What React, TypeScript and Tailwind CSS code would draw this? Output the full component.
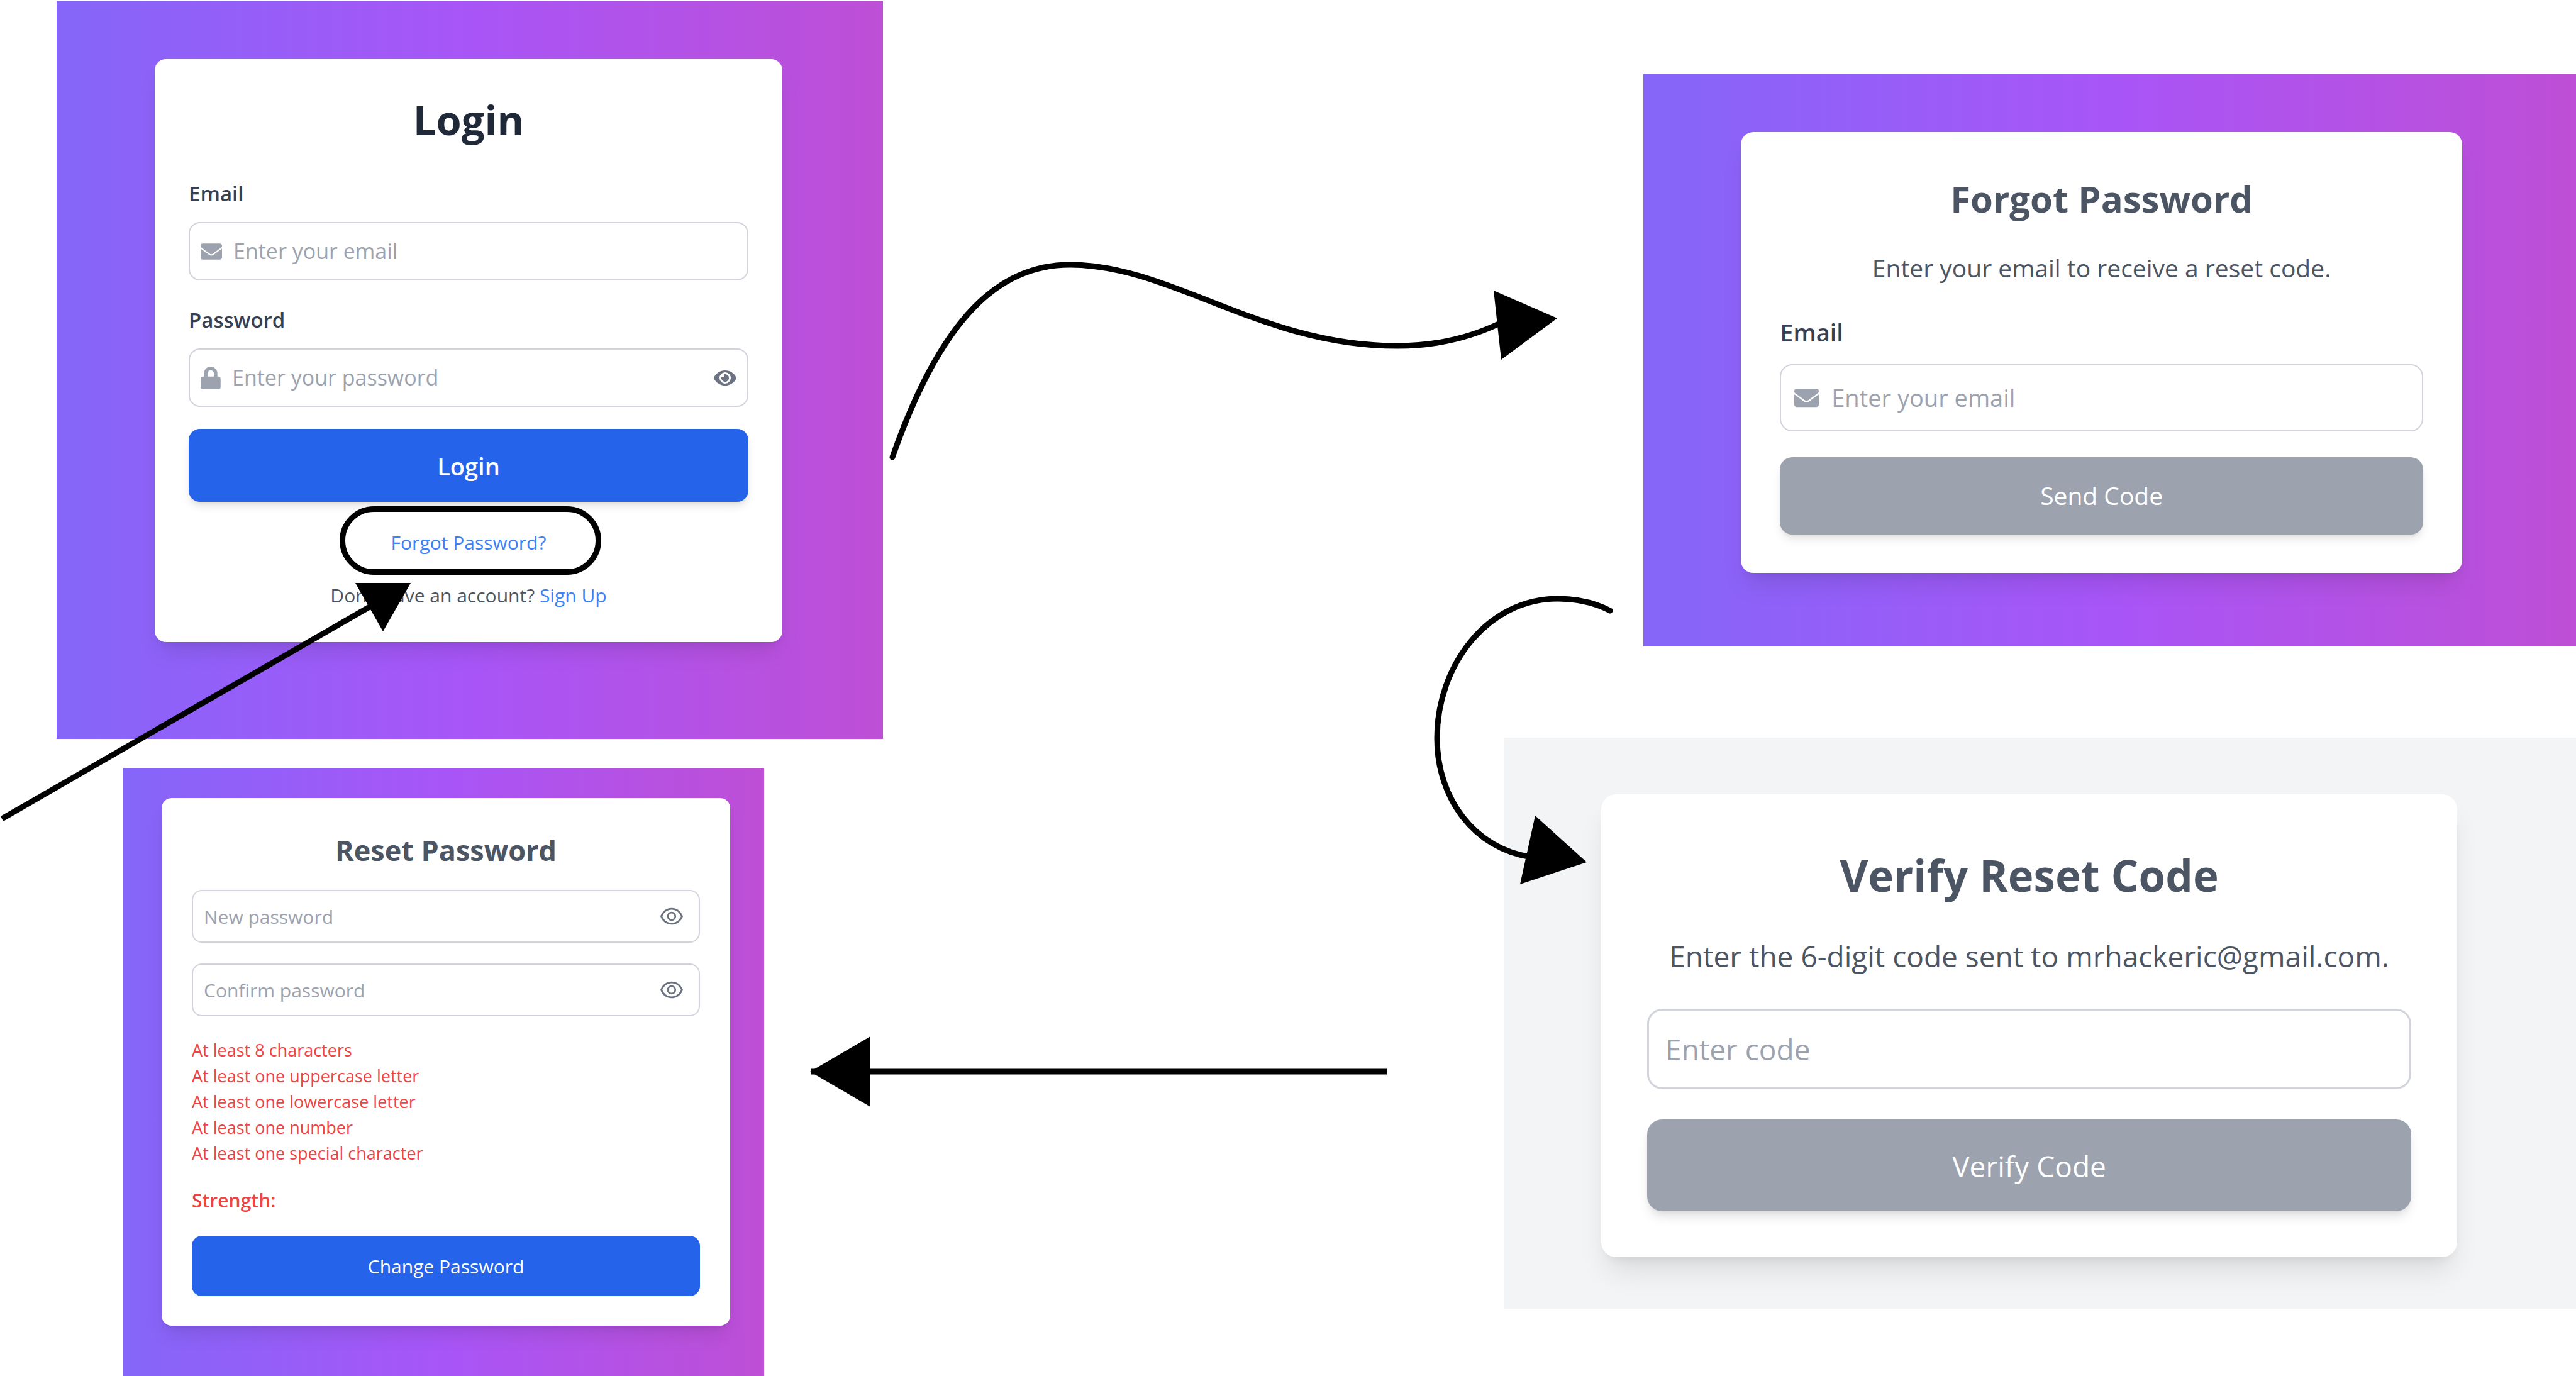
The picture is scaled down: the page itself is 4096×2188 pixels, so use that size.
import { useState, type ReactNode } from "react";
import { FaEnvelope, FaEye, FaLock } from "react-icons/fa";
import { AiOutlineEye } from "react-icons/ai";

const requirements = [
  "At least 8 characters",
  "At least one uppercase letter",
  "At least one lowercase letter",
  "At least one number",
  "At least one special character",
];

const gradient = "bg-linear-to-r/srgb from-[#8566f9] via-[#a855f7] to-[#be4fd6]";

function Card({ className, children }: { className: string; children: ReactNode }) {
  return <div className={`flex flex-col bg-white ${className}`}>{children}</div>;
}

function LoginPanel() {
  const [visible, setVisible] = useState(false);
  return (
    <section className={`ml-[90px] mt-px w-[64.16%] pb-[154px] pl-[156px] pr-[160px] pt-[93px] ${gradient}`}>
      <Card className="rounded-[18px] px-[54px] pb-[49px] pt-[55px] shadow-[0_22px_34px_-7px_rgba(0,0,0,0.1),0_9px_14px_-9px_rgba(0,0,0,0.1)]">
        <h1 className="text-center text-[65px] font-bold leading-[82px] text-[#1f2937]">Login</h1>
        <label htmlFor="login-email" className="mt-[52px] text-[33px] font-semibold leading-[50px] text-[#374151]">Email</label>
        <div className="mt-[20px] flex h-[93px] items-center gap-[18px] rounded-[18px] border-2 border-[#d1d5db] px-[17px] text-[34px]">
          <FaEnvelope className="size-[34px] shrink-0 text-[#9ca3af]" />
          <input id="login-email" type="email" placeholder="Enter your email" className="min-w-0 flex-1 outline-none placeholder:text-[#9ca3af]" />
        </div>
        <label htmlFor="login-password" className="mt-[38px] text-[33px] font-semibold leading-[50px] text-[#374151]">Password</label>
        <div className="mt-[20px] flex h-[93px] items-center gap-[18px] rounded-[18px] border-2 border-[#d1d5db] px-[17px] text-[34px]">
          <FaLock className="h-[36px] w-[32px] shrink-0 text-[#9ca3af]" />
          <input id="login-password" type={visible ? "text" : "password"} placeholder="Enter your password" className="min-w-0 flex-1 outline-none placeholder:text-[#9ca3af]" />
          <button type="button" aria-label="Show password" onClick={() => setVisible(!visible)}>
            <FaEye className="size-[36px] text-[#6b7280]" />
          </button>
        </div>
        <button type="button" className="mt-[35px] h-[116px] rounded-[18px] bg-[#2563eb] pt-[2px] text-[38px] font-semibold text-white shadow-[0_9px_14px_-2px_rgba(0,0,0,0.1),0_5px_9px_-5px_rgba(0,0,0,0.1)]">Login</button>
        <a href="#forgot" className="ml-[240px] mt-[7px] flex h-[109px] w-[416px] items-center justify-center self-start rounded-full border-[9px] border-black pr-[6px] pt-[6px] text-[30px] text-[#3b82f6]">Forgot Password?</a>
        <p className="mt-[8px] text-center text-[30px] leading-[50px] text-[#4b5563]">
          Don't have an account? <a href="#signup" className="text-[#3b82f6]">Sign Up</a>
        </p>
      </Card>
    </section>
  );
}

function PasswordField({ id, label }: { id: string; label: string }) {
  const [visible, setVisible] = useState(false);
  return (
    <div className="flex h-[84px] items-center rounded-[16px] border-2 border-[#d1d5db] pl-[17px] pr-[22px] text-[30px]">
      <input id={id} aria-label={label} type={visible ? "text" : "password"} placeholder={label} className="min-w-0 flex-1 outline-none placeholder:text-[#9ca3af]" />
      <button type="button" aria-label={`Show ${label}`} onClick={() => setVisible(!visible)}>
        <AiOutlineEye className="size-[42px] text-[#6b7280]" />
      </button>
    </div>
  );
}

function ResetPanel() {
  return (
    <section className={`ml-[196px] mt-[46px] w-[49.76%] flex-1 pl-[61px] pr-[54px] pt-[48px] ${gradient}`}>
      <Card className="rounded-[16px] px-[48px] pb-[47px] pt-[48px] shadow-[0_20px_30px_-6px_rgba(0,0,0,0.1),0_8px_12px_-8px_rgba(0,0,0,0.1)]">
        <h2 className="text-center text-[45px] font-bold leading-[70px] text-[#4b5563]">Reset Password</h2>
        <div className="mt-[28px] flex flex-col gap-[33px]">
          <PasswordField id="new-password" label="New password" />
          <PasswordField id="confirm-password" label="Confirm password" />
        </div>
        <ul className="mt-[33px] text-[27px] leading-[41px] text-[#ef4444]">
          {requirements.map((r) => <li key={r}>{r}</li>)}
        </ul>
        <p className="mt-[32px] text-[30px] font-semibold leading-[46px] text-[#ef4444]">Strength:</p>
        <button type="button" className="mt-[33px] h-[96px] rounded-[16px] bg-[#2563eb] text-[30px] text-white">Change Password</button>
      </Card>
    </section>
  );
}

function ForgotPanel() {
  return (
    <section className={`mt-[118px] w-[72.4%] pb-[117px] pl-[155px] pr-[181px] pt-[92px] ${gradient}`}>
      <Card className="rounded-[20px] px-[62px] pb-[61px] pt-[62px] shadow-[0_26px_39px_-8px_rgba(0,0,0,0.1),0_10px_16px_-10px_rgba(0,0,0,0.1)]">
        <h2 className="text-center text-[58px] font-bold leading-[88px] text-[#4b5563]">Forgot Password</h2>
        <p className="mt-[36px] text-center text-[39px] leading-[60px] text-[#4b5563]">Enter your email to receive a reset code.</p>
        <label htmlFor="forgot-email" className="mt-[42px] text-[38px] font-semibold leading-[60px] text-[#374151]">Email</label>
        <div className="mt-[21px] flex h-[107px] items-center gap-[20px] rounded-[20px] border-2 border-[#d1d5db] px-[21px] text-[38px]">
          <FaEnvelope className="size-[39px] shrink-0 text-[#9ca3af]" />
          <input id="forgot-email" type="email" placeholder="Enter your email" className="min-w-0 flex-1 outline-none placeholder:text-[#9ca3af]" />
        </div>
        <button type="button" className="mt-[41px] h-[123px] rounded-[20px] bg-[#9ca3af] text-[39px] text-white shadow-[0_10px_16px_-3px_rgba(0,0,0,0.1),0_5px_10px_-5px_rgba(0,0,0,0.1)]">Send Code</button>
      </Card>
    </section>
  );
}

function VerifyPanel() {
  return (
    <section className="mt-[145px] w-[83.2%] bg-[#f3f4f6] pb-[82px] pl-[154px] pr-[189px] pt-[90px]">
      <Card className="rounded-[24px] px-[73px] pb-[73px] pt-[73px] shadow-[0_30px_46px_-9px_rgba(0,0,0,0.1),0_12px_18px_-12px_rgba(0,0,0,0.1)]">
        <h2 className="text-center text-[69px] font-bold leading-[110px] text-[#4b5563]">Verify Reset Code</h2>
        <p className="mt-[38px] text-center text-[46px] leading-[72px] text-[#4b5563]">Enter the 6-digit code sent to mrhackeric@gmail.com.</p>
        <input aria-label="Enter code" placeholder="Enter code" className="mt-[48px] h-[128px] rounded-[24px] border-[3px] border-[#d1d5db] px-[26px] text-[46px] outline-none placeholder:text-[#9ca3af]" />
        <button type="button" className="mt-[48px] h-[146px] rounded-[24px] bg-[#9ca3af] pt-[2px] text-[46px] text-white shadow-[0_12px_18px_-3px_rgba(0,0,0,0.1),0_6px_12px_-6px_rgba(0,0,0,0.1)]">Verify Code</button>
      </Card>
    </section>
  );
}

function Arrows() {
  return (
    <svg viewBox="0 0 4096 2188" className="pointer-events-none absolute inset-0 h-full w-full" aria-hidden="true">
      <g fill="none" stroke="#000" strokeWidth="9" strokeLinecap="round">
        <path d="M3 1302L591 963" strokeLinecap="butt" />
        <path d="M1419 727C1498 501 1591 421 1701 421C1863 421 2004 550 2222 550C2280 550 2335 538 2385 514" />
        <path d="M2560 971C2535 958 2505 952 2477 952C2365 952 2285 1058 2285 1174C2285 1270 2345 1350 2435 1363" />
        <path d="M1289 1704H2206" strokeLinecap="butt" />
      </g>
      <path d="M565 927H653L609 1004ZM2375 462L2476 506L2387 572ZM2441 1297L2523 1371L2417 1406ZM1288 1704L1384 1648V1760Z" />
    </svg>
  );
}

export default function App() {
  return (
    <main className="relative flex min-h-screen overflow-hidden bg-white font-['Open_Sans',sans-serif]">
      <div className="flex w-1/2 flex-col">
        <LoginPanel />
        <ResetPanel />
      </div>
      <div className="flex w-1/2 flex-col items-end">
        <ForgotPanel />
        <VerifyPanel />
      </div>
      <Arrows />
    </main>
  );
}
